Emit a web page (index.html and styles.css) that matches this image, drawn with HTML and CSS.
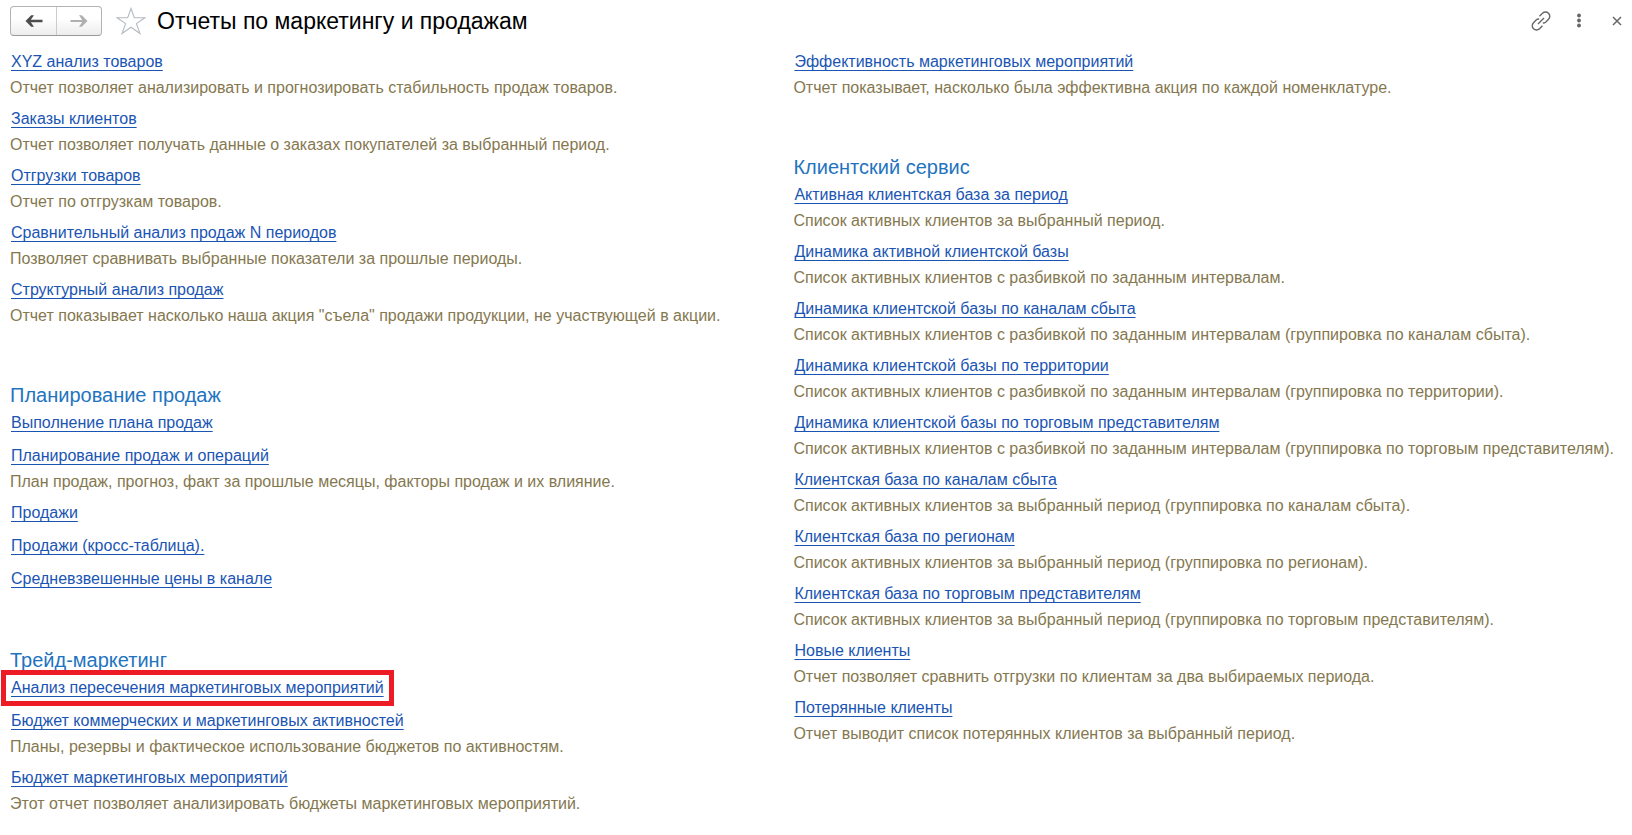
FILE: index.html
```html
<!DOCTYPE html>
<html lang="ru">
<head>
<meta charset="utf-8">
<title>Отчеты по маркетингу и продажам</title>
<link rel="stylesheet" href="styles.css">
</head>
<body>
<header class="toolbar">
  <div class="nav">
    <button class="nav-button" type="button" aria-label="Назад">
      <svg width="18" height="12" viewBox="0 0 18 12" fill="#4d4d4d"><path d="M.5 6 6.200.3H9L5.800 4.700H17.500V7.300H5.800L9 11.700H6.200Z"/></svg>
    </button>
    <button class="nav-button" type="button" aria-label="Вперед">
      <svg width="18" height="12" viewBox="0 0 18 12" fill="#b0b0b0"><path d="M17.500 6 11.800.3H9L12.200 4.900H.5V7.100H12.200L9 11.700H11.800Z"/></svg>
    </button>
  </div>
  <button class="icon-button" type="button" aria-label="Добавить в избранное">
    <svg width="30" height="28" viewBox="0 0 30 28"><path d="M15 1.500 18.300 10.800H28.800L20.400 16.600 24 26.500 15 20.200 6 26.500 9.600 16.600 1.200 10.800H11.700Z" fill="#fff" stroke="#b4bac0" stroke-width="1.100"/></svg>
  </button>
  <h1 class="title">Отчеты по маркетингу и продажам</h1>
  <div class="actions">
    <button class="icon-button action" type="button" aria-label="Получить ссылку">
      <svg width="20" height="20" viewBox="0 0 20 20" fill="none" stroke="#666" stroke-width="1.400"><path d="M8.500 5.200 11.500 2.300a4.200 4.200 0 0 1 6 0 4.200 4.200 0 0 1 0 6L14.600 11.200q-1.300 1-2.800.7M11.500 14.800 8.500 17.700a4.200 4.200 0 0 1-6 0 4.200 4.200 0 0 1 0-6L5.400 8.800q1.300-1 2.800-.7M7 13l6-6"/></svg>
    </button>
    <button class="icon-button action" type="button" aria-label="Еще">
      <svg width="6" height="16" viewBox="0 0 6 16" fill="#666"><circle cx="3" cy="2.500" r="1.900"/><circle cx="3" cy="7.500" r="1.900"/><circle cx="3" cy="12.500" r="1.900"/></svg>
    </button>
    <button class="icon-button action" type="button" aria-label="Закрыть">
      <svg width="10" height="10" viewBox="0 0 10 10"><path d="m1 1 8 8M9 1 1 9" stroke="#666" stroke-width="1.500"/></svg>
    </button>
  </div>
</header>
<main class="reports">
  <div class="column">
    <section class="group">
      <div class="item"><a class="link" href="#">XYZ анализ товаров</a><p class="note">Отчет позволяет анализировать и прогнозировать стабильность продаж товаров.</p></div>
      <div class="item"><a class="link" href="#">Заказы клиентов</a><p class="note">Отчет позволяет получать данные о заказах покупателей за выбранный период.</p></div>
      <div class="item"><a class="link" href="#">Отгрузки товаров</a><p class="note">Отчет по отгрузкам товаров.</p></div>
      <div class="item"><a class="link" href="#">Сравнительный анализ продаж N периодов</a><p class="note">Позволяет сравнивать выбранные показатели за прошлые периоды.</p></div>
      <div class="item"><a class="link" href="#">Структурный анализ продаж</a><p class="note">Отчет показывает насколько наша акция "съела" продажи продукции, не участвующей в акции.</p></div>
    </section>
    <section class="group">
      <h2 class="heading">Планирование продаж</h2>
      <div class="item"><a class="link" href="#">Выполнение плана продаж</a></div>
      <div class="item"><a class="link" href="#">Планирование продаж и операций</a><p class="note">План продаж, прогноз, факт за прошлые месяцы, факторы продаж и их влияние.</p></div>
      <div class="item"><a class="link" href="#">Продажи</a></div>
      <div class="item"><a class="link" href="#">Продажи (кросс-таблица).</a></div>
      <div class="item"><a class="link" href="#">Средневзвешенные цены в канале</a></div>
    </section>
    <section class="group">
      <h2 class="heading">Трейд-маркетинг</h2>
      <div class="item"><a class="link marked" href="#">Анализ пересечения маркетинговых мероприятий</a></div>
      <div class="item"><a class="link" href="#">Бюджет коммерческих и маркетинговых активностей</a><p class="note">Планы, резервы и фактическое использование бюджетов по активностям.</p></div>
      <div class="item"><a class="link" href="#">Бюджет маркетинговых мероприятий</a><p class="note">Этот отчет позволяет анализировать бюджеты маркетинговых мероприятий.</p></div>
    </section>
  </div>
  <div class="column">
    <section class="group">
      <div class="item"><a class="link" href="#">Эффективность маркетинговых мероприятий</a><p class="note">Отчет показывает, насколько была эффективна акция по каждой номенклатуре.</p></div>
    </section>
    <section class="group">
      <h2 class="heading">Клиентский сервис</h2>
      <div class="item"><a class="link" href="#">Активная клиентская база за период</a><p class="note">Список активных клиентов за выбранный период.</p></div>
      <div class="item"><a class="link" href="#">Динамика активной клиентской базы</a><p class="note">Список активных клиентов с разбивкой по заданным интервалам.</p></div>
      <div class="item"><a class="link" href="#">Динамика клиентской базы по каналам сбыта</a><p class="note">Список активных клиентов с разбивкой по заданным интервалам (группировка по каналам сбыта).</p></div>
      <div class="item"><a class="link" href="#">Динамика клиентской базы по территории</a><p class="note">Список активных клиентов с разбивкой по заданным интервалам (группировка по территории).</p></div>
      <div class="item"><a class="link" href="#">Динамика клиентской базы по торговым представителям</a><p class="note">Список активных клиентов с разбивкой по заданным интервалам (группировка по торговым представителям).</p></div>
      <div class="item"><a class="link" href="#">Клиентская база по каналам сбыта</a><p class="note">Список активных клиентов за выбранный период (группировка по каналам сбыта).</p></div>
      <div class="item"><a class="link" href="#">Клиентская база по регионам</a><p class="note">Список активных клиентов за выбранный период (группировка по регионам).</p></div>
      <div class="item"><a class="link" href="#">Клиентская база по торговым представителям</a><p class="note">Список активных клиентов за выбранный период (группировка по торговым представителям).</p></div>
      <div class="item"><a class="link" href="#">Новые клиенты</a><p class="note">Отчет позволяет сравнить отгрузки по клиентам за два выбираемых периода.</p></div>
      <div class="item"><a class="link" href="#">Потерянные клиенты</a><p class="note">Отчет выводит список потерянных клиентов за выбранный период.</p></div>
    </section>
  </div>
</main>
</body>
</html>
```
FILE: styles.css
```css
* { box-sizing: border-box; }
body {
  margin: 0;
  background: #fff;
  font: 16px/24px "Liberation Sans", Arial, sans-serif;
}
.toolbar {
  display: flex;
  align-items: center;
  height: 42px;
  padding: 0 5px 0 10px;
}
.nav {
  display: flex;
  height: 30px;
  margin-right: 14px;
  border: 1px solid #b3b3b3;
  border-bottom-color: #999;
  border-radius: 4px;
  background: linear-gradient(#fff 40%, #ededed);
}
.nav-button {
  display: flex;
  align-items: center;
  justify-content: center;
  width: 45px;
  padding: 0;
  border: 0;
  background: none;
}
.nav-button + .nav-button { border-left: 1px solid #ccc; }
.icon-button {
  display: flex;
  align-items: center;
  justify-content: center;
  padding: 0;
  border: 0;
  background: none;
}
.title {
  margin: 0 0 0 11px;
  font-size: 23px;
  font-weight: 400;
  color: #000;
}
.actions {
  display: flex;
  gap: 18px;
  margin-left: auto;
}
.action {
  width: 20px;
  height: 24px;
}
.reports {
  display: grid;
  grid-template-columns: 48.3% 1fr;
  padding: 8px 0 0 10px;
}
.group + .group { margin-top: 48px; }
.heading {
  margin: 0 0 4px;
  font-size: 20px;
  font-weight: 400;
  line-height: 24px;
  color: #1f74bf;
}
.item { padding-bottom: 7px; }
.link {
  display: block;
  width: fit-content;
  margin: 0 0 2px 1px;
  color: #1a55b4;
  text-decoration: underline;
  text-decoration-thickness: 1px;
  text-underline-offset: 3px;
  text-decoration-skip-ink: none;
}
.marked {
  margin-left: -3px;
  padding: 0 4px;
  outline: 5px solid #ed1c24;
  outline-offset: 1px;
}
.note {
  margin: 0;
  color: #85784f;
  white-space: nowrap;
}
```
